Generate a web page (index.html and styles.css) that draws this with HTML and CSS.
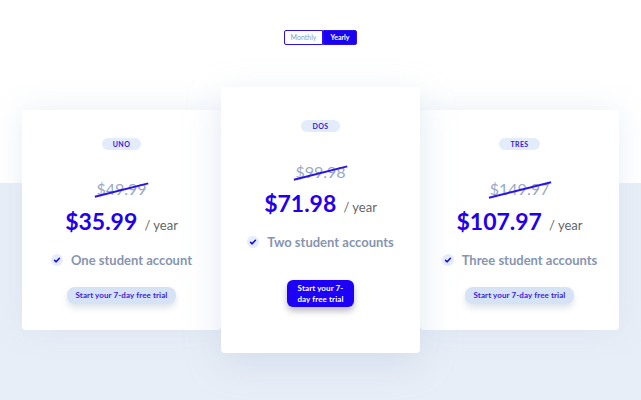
FILE: index.html
```html
<!DOCTYPE html>
<html>
<head>
<meta charset="utf-8">
<title>Pricing</title>
<link rel="stylesheet" href="styles.css">
</head>
<body>
<div class="page">
    <div class="toggle">
        <span class="toggle-opt">Monthly</span>
        <span class="toggle-opt active">Yearly</span>
    </div>
    <!--/toggle-->
    <div class="plans">
        <div class="plan">
            <span class="badge">UNO</span>
            <div class="old-price"><span>$49.99</span></div>
            <div class="price"><b>$35.99</b> <span>/ year</span></div>
            <div class="feature">
                <svg class="check" width="12" height="12" viewBox="0 0 12 12"><circle cx="6" cy="6" r="6" fill="#e5edfb"/><path d="M3.6 6.3 L5.2 7.8 L8.4 4.3" fill="none" stroke="#1a0fd0" stroke-width="1.6" stroke-linecap="round" stroke-linejoin="round"/></svg>
                <span>One student account</span>
            </div>
            <a class="btn" href="javascript:;">Start your 7-day free trial</a>
        </div>
        <div class="plan featured">
            <span class="badge">DOS</span>
            <div class="old-price"><span>$99.98</span></div>
            <div class="price"><b>$71.98</b> <span>/ year</span></div>
            <div class="feature">
                <svg class="check" width="12" height="12" viewBox="0 0 12 12"><circle cx="6" cy="6" r="6" fill="#e5edfb"/><path d="M3.6 6.3 L5.2 7.8 L8.4 4.3" fill="none" stroke="#1a0fd0" stroke-width="1.6" stroke-linecap="round" stroke-linejoin="round"/></svg>
                <span>Two student accounts</span>
            </div>
            <a class="btn" href="javascript:;">Start your 7-day free trial</a>
        </div>
        <div class="plan">
            <span class="badge">TRES</span>
            <div class="old-price"><span>$149.97</span></div>
            <div class="price"><b>$107.97</b> <span>/ year</span></div>
            <div class="feature">
                <svg class="check" width="12" height="12" viewBox="0 0 12 12"><circle cx="6" cy="6" r="6" fill="#e5edfb"/><path d="M3.6 6.3 L5.2 7.8 L8.4 4.3" fill="none" stroke="#1a0fd0" stroke-width="1.6" stroke-linecap="round" stroke-linejoin="round"/></svg>
                <span>Three student accounts</span>
            </div>
            <a class="btn" href="javascript:;">Start your 7-day free trial</a>
        </div>
    </div>
    <!--/plans-->
</div>
</body>
</html>
```

FILE: styles.css
```css
body{margin:0;height:400px;background:linear-gradient(#fff 0,#fff 183px,#e8eef7 183px);font-family:Lato,"Open Sans",sans-serif;}
a{text-decoration:none;}
.page{padding-top:30px;}

.toggle{display:flex;justify-content:center;}
.toggle-opt{box-sizing:border-box;height:15px;font:7px/13px Lato,sans-serif;color:#8d9cb6;border:1px solid #2a12f0;background:#fff;padding:0 7px;}
.toggle-opt:first-child{border-radius:2px 0 0 2px;width:39px;text-align:center;padding:0;}
.toggle-opt.active{background:#1c00f0;color:#fff;font-weight:700;border-radius:0 2px 2px 0;width:34px;text-align:center;padding:0;}

.plans{display:flex;justify-content:center;align-items:flex-start;margin-top:42px;}
.plan{box-sizing:border-box;width:199px;margin-top:23px;padding:28px 0 26px;background:#fff;border-radius:4px;box-shadow:0 0 30px rgba(205,218,236,.45);display:flex;flex-direction:column;align-items:center;}
.plan.featured{position:relative;z-index:1;margin-top:0;padding:33px 0 46px;box-shadow:0 10px 34px rgba(170,188,215,.35);}

.badge{display:block;height:12px;padding:0 11px;border-radius:6px;background:#e3ecfb;color:#3420d6;font:700 7px/12px Lato,sans-serif;letter-spacing:.4px;}

.old-price{margin-top:29px;height:20px;font:16px/20px Lato,sans-serif;color:#98a9c3;}
.plan.featured .old-price{margin-top:30px;}
.old-price span{position:relative;display:inline-block;}
.old-price span:after{content:"";position:absolute;left:-2px;right:-3px;top:10px;height:1.6px;background:#2a12ea;transform:rotate(-14deg);}

.price{margin-top:7px;height:30px;line-height:30px;white-space:nowrap;}
.plan.featured .price{margin-top:6px;}
.price b{font-size:23px;color:#2200ee;}
.price span{font-size:13px;color:#666;margin-left:3px;}

.feature{margin-top:14px;height:20px;display:flex;align-items:center;gap:8px;font:700 13px/20px Lato,sans-serif;color:#8695b0;}
.check{flex-shrink:0;}

.btn{margin-top:17px;box-sizing:border-box;padding:0 9px;height:17px;border-radius:8px;background:#d6e3f5;color:#3a22dc;font:700 8px/17px Lato,sans-serif;letter-spacing:.1px;box-shadow:0 4px 6px rgba(150,165,190,.3);white-space:nowrap;}
.plan.featured .btn{margin-top:28px;width:67px;height:27px;padding:3px 8px;line-height:11px;white-space:normal;text-align:center;background:#1d00f5;color:#fff;border-radius:6px;box-shadow:0 4px 6px rgba(60,60,80,.35);}
```
